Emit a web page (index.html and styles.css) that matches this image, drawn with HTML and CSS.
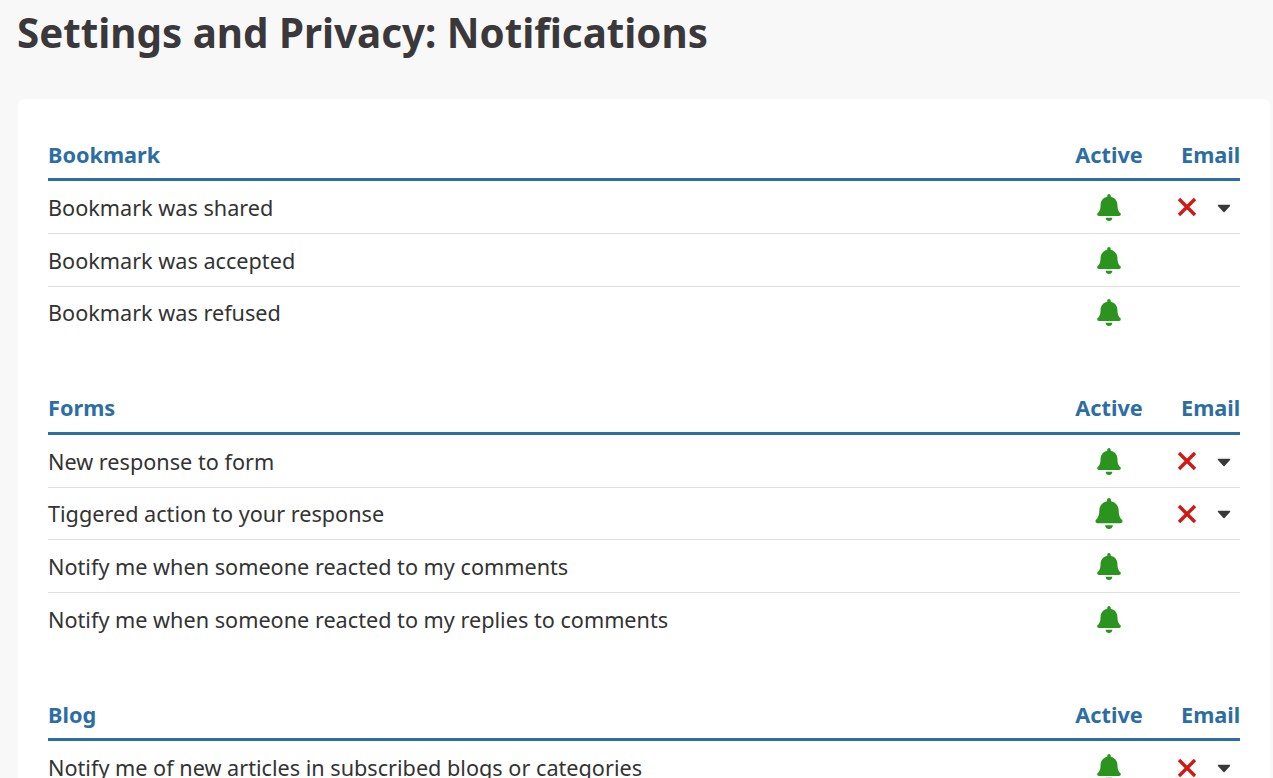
FILE: index.html
```html
<!DOCTYPE html>
<html>
<head>
    <title>Settings and Privacy: Notifications</title>
    <link rel="stylesheet" href="styles.css">
</head>
<body>
    <svg class="defs" width="0" height="0">
        <symbol id="bell" viewBox="0 0 448 512">
            <path d="M224 512c35 0 64-29 64-64H160c0 35 29 64 64 64zM439 362c-19-21-55-52-55-154 0-78-54-140-128-155V32c0-18-14-32-32-32s-32 14-32 32v21C118 68 64 130 64 208c0 102-36 133-55 154-6 6-9 14-9 22 0 16 13 32 32 32h384c19 0 32-16 32-32 0-8-3-16-9-22z"/>
        </symbol>
        <symbol id="cross" viewBox="0 0 20 20">
            <path d="M2 2l16 16M18 2L2 18"/>
        </symbol>
        <symbol id="caret" viewBox="0 0 14 9">
            <path d="M1.5 1.5h11L7 7.5z"/>
        </symbol>
    </svg>

    <h1>Settings and Privacy: Notifications</h1>

    <div class="card">
        <div class="group">
            <div class="row head">
                <div class="name">Bookmark</div>
                <div class="active">Active</div>
                <div class="email">Email</div>
            </div>
            <div class="row">
                <div class="name">Bookmark was shared</div>
                <div class="active"><svg class="bell"><use href="#bell"/></svg></div>
                <div class="email"><svg class="cross"><use href="#cross"/></svg><svg class="caret"><use href="#caret"/></svg></div>
            </div>
            <div class="row">
                <div class="name">Bookmark was accepted</div>
                <div class="active"><svg class="bell"><use href="#bell"/></svg></div>
                <div class="email"></div>
            </div>
            <div class="row">
                <div class="name">Bookmark was refused</div>
                <div class="active"><svg class="bell"><use href="#bell"/></svg></div>
                <div class="email"></div>
            </div>
        </div>

        <div class="group">
            <div class="row head">
                <div class="name">Forms</div>
                <div class="active">Active</div>
                <div class="email">Email</div>
            </div>
            <div class="row">
                <div class="name">New response to form</div>
                <div class="active"><svg class="bell"><use href="#bell"/></svg></div>
                <div class="email"><svg class="cross"><use href="#cross"/></svg><svg class="caret"><use href="#caret"/></svg></div>
            </div>
            <div class="row">
                <div class="name">Tiggered action to your response</div>
                <div class="active"><svg class="bell big"><use href="#bell"/></svg></div>
                <div class="email"><svg class="cross"><use href="#cross"/></svg><svg class="caret"><use href="#caret"/></svg></div>
            </div>
            <div class="row">
                <div class="name">Notify me when someone reacted to my comments</div>
                <div class="active"><svg class="bell"><use href="#bell"/></svg></div>
                <div class="email"></div>
            </div>
            <div class="row">
                <div class="name">Notify me when someone reacted to my replies to comments</div>
                <div class="active"><svg class="bell"><use href="#bell"/></svg></div>
                <div class="email"></div>
            </div>
        </div>

        <div class="group">
            <div class="row head">
                <div class="name">Blog</div>
                <div class="active">Active</div>
                <div class="email">Email</div>
            </div>
            <div class="row">
                <div class="name">Notify me of new articles in subscribed blogs or categories</div>
                <div class="active"><svg class="bell"><use href="#bell"/></svg></div>
                <div class="email"><svg class="cross"><use href="#cross"/></svg><svg class="caret"><use href="#caret"/></svg></div>
            </div>
        </div>
    </div>
</body>
</html>
```

FILE: styles.css
```css
html, body {
    height: 100%;
    overflow: hidden;
}

body {
    background-color: #F8F8F8;
    color: #3A383A;
    font-family: "Noto Sans", sans-serif;
    margin: 0;
    padding: 0 3px 0 18px;
}

.defs {
    display: block;
}

h1 {
    font-size: 40.3px;
    line-height: 48px;
    font-weight: 700;
    margin: 0 0 0 -1px;
    padding: 9px 0 42px;
}

.card {
    background-color: #FFF;
    border-radius: 6px;
    padding: 30px 30px 0;
}

.group {
    margin-bottom: 43.4px;
}

.row {
    display: flex;
    align-items: center;
    height: 50.8px;
    padding-top: 1px;
    border-bottom: 1px solid #DEDEDE;
    font-size: 21.65px;
    color: #333;
}

.group .row:last-child {
    border-bottom-color: transparent;
}

.row.head {
    height: 47.6px;
    padding-top: 1.4px;
    border-bottom: 3px solid #2C6EA4;
    color: #2C6EA4;
    font-weight: 700;
    font-size: 21.7px;
}

.name {
    flex: 1;
}

.active {
    width: 68px;
    display: flex;
    justify-content: center;
    align-items: center;
    white-space: nowrap;
}

.email {
    width: 97px;
    padding-left: 38px;
    box-sizing: border-box;
    display: flex;
    align-items: center;
}

.bell {
    width: 24px;
    height: 27px;
    fill: #2A941E;
}

.bell.big {
    width: 28px;
    height: 31px;
}

.cross {
    width: 20px;
    height: 20px;
    margin-left: -4px;
    fill: none;
    stroke: #CE1A12;
    stroke-width: 3.4;
}

.caret {
    width: 14px;
    height: 9px;
    margin: 2px 0 0 20px;
    fill: #3A383A;
    stroke: #3A383A;
    stroke-width: 1.5;
    stroke-linejoin: round;
}
```
